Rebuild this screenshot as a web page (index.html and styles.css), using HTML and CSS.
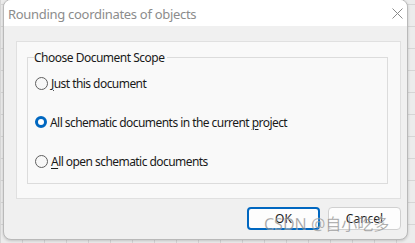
FILE: index.html
```html
<!DOCTYPE html>
<html>
<head>
<meta charset="utf-8">
<link rel="stylesheet" href="styles.css">
</head>
<body>
<div class="canvas">
  <div class="dialog">
    <div class="titlebar">
      <span class="title">Rounding coordinates of objects</span>
      <svg class="close" width="11" height="11" viewBox="0 0 11 11"><path d="M0.5 0.5 L10.5 10.5 M10.5 0.5 L0.5 10.5" stroke="#8a8a8a" stroke-width="1" fill="none"/></svg>
    </div>
    <div class="body">
      <div class="panel">
        <fieldset class="group">
          <legend class="legend">Choose Document Scope</legend>
          <div class="options">
            <label class="option"><span class="radio"></span><span class="label"><u>J</u>ust this document</span></label>
            <label class="option"><span class="radio checked"></span><span class="label">All schematic documents in the current <u>p</u>roject</span></label>
            <label class="option"><span class="radio"></span><span class="label"><u>A</u>ll open schematic documents</span></label>
          </div>
        </fieldset>
      </div>
      <div class="buttons">
        <button class="btn default">OK</button>
        <button class="btn">Cancel</button>
      </div>
    </div>
  </div>
  <div class="watermark">CSDN @自小吃多</div>
</div>
</body>
</html>
```
FILE: styles.css
```css
html, body {
  margin: 0;
  padding: 0;
}
body {
  width: 415px;
  height: 243px;
  overflow: hidden;
  background: #e9e9e9;
  font-family: "Noto Sans", "Open Sans", sans-serif;
}
.canvas {
  position: relative;
  width: 415px;
  height: 243px;
  background-color: #ececec;
  background-image:
    linear-gradient(to right, #d6d6d6 1px, transparent 1px),
    linear-gradient(to bottom, #d6d6d6 1px, transparent 1px);
  background-size: 22px 22px;
  background-position: 0 4px;
}
.dialog {
  position: absolute;
  left: 3px;
  top: -1px;
  width: 403px;
  height: 239px;
  border: 1px solid #b9b9b9;
  border-radius: 8px;
  background: #f0f0f0;
  overflow: hidden;
  display: flex;
  flex-direction: column;
  box-shadow: 0 1px 3px rgba(0,0,0,0.18);
}
.titlebar {
  height: 26px;
  background: #ffffff;
  display: flex;
  align-items: center;
  justify-content: space-between;
  padding: 0 4px 0 4px;
  flex: none;
}
.title {
  font-size: 13px;
  color: #8c8c8c;
  letter-spacing: -0.3px;
  margin-top: 1px;
}
.close {
  margin-top: 1px;
}
.body {
  flex: 1;
  padding: 15px 6px 0 12px;
  display: flex;
  flex-direction: column;
}
.panel {
  height: 158px;
  box-sizing: border-box;
  background: #f9f9f9;
  border: 1px solid #e0e0e0;
  padding: 7px 12px 14px 10px;
  display: flex;
}
.group {
  flex: 1;
  margin: 0;
  border: 1px solid #dcdcdc;
  padding: 0 0 0 7px;
  min-width: 0;
}
.legend {
  font-size: 12px;
  color: #1a1a1a;
  padding: 0 3px 0 0;
  margin-left: -1px;
  letter-spacing: -0.5px;
}
.options {
  display: flex;
  flex-direction: column;
  gap: 23px;
  padding-top: 9px;
}
.option {
  display: flex;
  align-items: center;
  height: 16px;
  font-size: 12px;
  color: #1a1a1a;
  letter-spacing: -0.55px;
}
.label u {
  text-decoration-thickness: 1px;
  text-underline-offset: 2px;
}
.radio {
  width: 11px;
  height: 11px;
  border: 1px solid #5f5f5f;
  border-radius: 50%;
  background: #f7f7f7;
  margin-right: 3px;
  flex: none;
  box-sizing: content-box;
}
.radio.checked {
  width: 6px;
  height: 6px;
  border: 3.5px solid #0067c0;
  background: #ffffff;
}
.buttons {
  display: flex;
  justify-content: flex-end;
  gap: 8px;
  margin-top: 8px;
}
.btn {
  width: 73px;
  height: 23px;
  font-family: "Noto Sans", "Open Sans", sans-serif;
  font-size: 12px;
  color: #1a1a1a;
  background: #fdfdfd;
  border: 1px solid #d0d0d0;
  border-radius: 4px;
  padding: 0;
}
.btn.default {
  border: 2px solid #0067c0;
}
.watermark {
  position: absolute;
  left: 264px;
  top: 211px;
  font-family: "Noto Sans", "Noto Sans CJK SC", sans-serif;
  font-size: 16px;
  color: rgba(120,120,120,0.7);
  -webkit-text-stroke: 0.3px rgba(255,255,255,0.6);
  white-space: nowrap;
}
```
